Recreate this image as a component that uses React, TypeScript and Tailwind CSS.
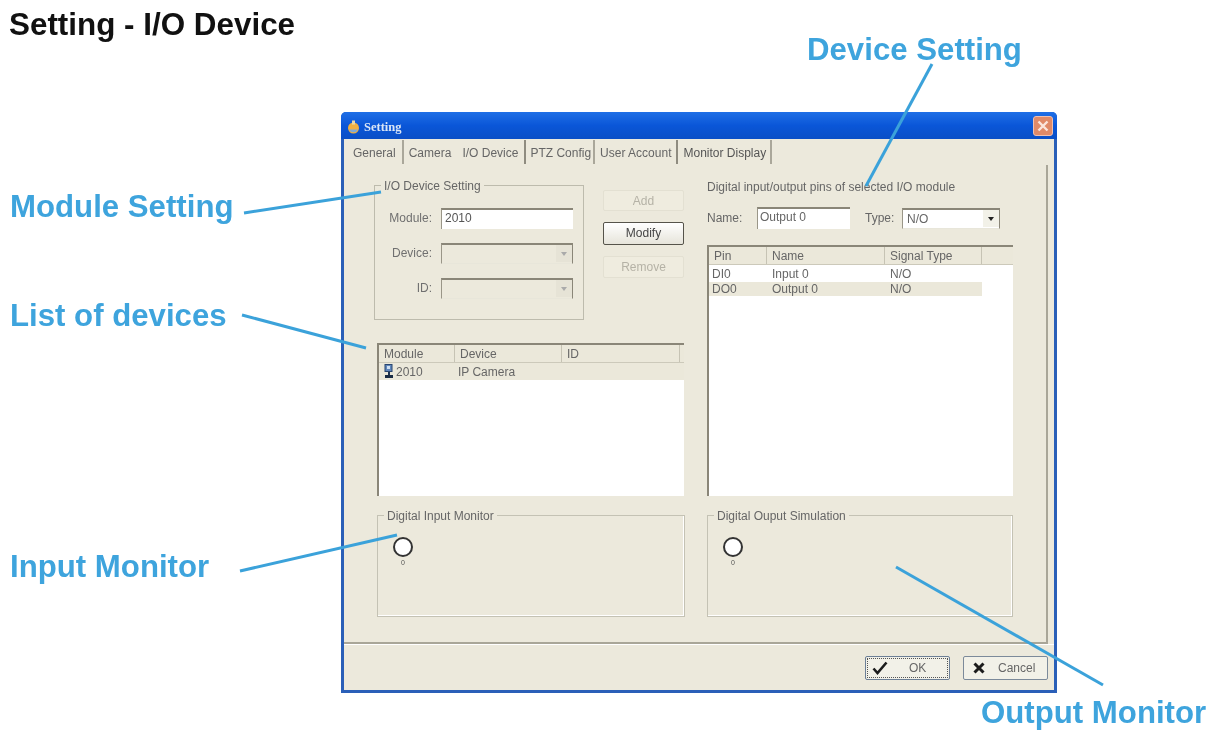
const groupTitle = "absolute -top-[7px] left-[6px] bg-[#ece9dc] px-[3px] text-[12px] leading-[14px] text-[#666] whitespace-nowrap";
const ui = "font-['Liberation_Sans',Arial,sans-serif]";

function Annotation({ className, children }: { className: string; children: string }) {
  return (
    <div className={`absolute text-[31.2px] leading-[34px] font-bold text-[#3ea4dd] whitespace-nowrap ${className}`}>
      {children}
    </div>
  );
}

function Combo({ disabled, value }: { disabled?: boolean; value?: string }) {
  return (
    <div
      className={`flex items-center h-[21px] border-t-2 border-l border-r border-b border-t-[#8a8678] border-l-[#9a9688] border-r-[#8a8678] border-b-[#e8e6da] ${
        disabled ? "w-[132px] bg-[#ece9dc]" : "w-[98px] bg-white"
      }`}
    >
      <span className="flex-1 pl-[4px] text-[12px] text-[#666]">{value}</span>
      <span className={`flex items-center justify-center w-[16px] h-[17px] ${disabled ? "bg-[#e6e3d6]" : "bg-[#f2f1e8]"}`}>
        <span className={`w-0 h-0 border-l-[3px] border-r-[3px] border-t-[4px] border-l-transparent border-r-transparent ${disabled ? "border-t-[#aaa]" : "border-t-[#222]"}`} />
      </span>
    </div>
  );
}

function LeftField({ label, children }: { label: string; children: React.ReactNode }) {
  return (
    <div className="flex items-center h-[22px]">
      <span className="w-[66px] pr-[9px] text-right text-[12px] text-[#707070]">{label}</span>
      {children}
    </div>
  );
}

function Lamp({ label }: { label: string }) {
  return (
    <div className="flex flex-col items-center w-[22px]">
      <span className="block w-[20px] h-[20px] rounded-full bg-white border-[2px] border-[#333]" />
      <span className="mt-[2px] text-[7px] leading-[8px] text-[#555]">{label}</span>
    </div>
  );
}

function Monitor({ title, label }: { title: string; label: string }) {
  return (
    <div className="relative h-[102px] border border-[#c4c2b4] pt-[21px] pl-[14px] shadow-[inset_-1px_-1px_0_#fff]">
      <span className={groupTitle}>{title}</span>
      <Lamp label={label} />
    </div>
  );
}

function ListHead({ cols }: { cols: [string, string][] }) {
  return (
    <div className="flex h-[18px] border-b border-[#ccc9ba] bg-[#ebe8da]">
      {cols.map(([name, w]) => (
        <span key={name} className={`${w} pl-[5px] border-r border-[#c6c3b4] text-[12px] leading-[18px] text-[#666]`}>
          {name}
        </span>
      ))}
    </div>
  );
}

export default function App() {
  return (
    <div className={`relative w-[1210px] h-[734px] bg-white overflow-hidden blur-[0.4px] ${ui}`}>
      <h1 className="pt-[10px] pl-[9px] h-[112px] text-[31.4px] leading-[30px] font-bold text-[#111]">
        Setting - I/O Device
      </h1>

      {/* dialog */}
      <div className="ml-[341px] w-[716px] h-[581px] flex flex-col rounded-t-[5px] bg-[#2a5fb8] px-[3px] pb-[3px]">
        <div className="flex items-center h-[27px] shrink-0 -mx-[3px] px-[5px] rounded-t-[5px] bg-gradient-to-b from-[#1f6fe6] via-[#0a56d8] to-[#0a4fc6]">
          <svg width="15" height="15" viewBox="0 0 15 15" className="mt-[2px]">
            <circle cx="7.5" cy="9" r="5.5" fill="#f0b040" />
            <path d="M3 10.5 A5 5 0 0 0 12 10.5Z" fill="#7fa9d8" />
            <rect x="6" y="1.5" width="3" height="4" fill="#e8d7a8" />
          </svg>
          <span className="ml-[3px] mt-[3px] font-['Liberation_Serif',serif] text-[12.5px] font-bold text-[#dbe6f6]">Setting</span>
          <span className="ml-auto mr-[-1px] flex items-center justify-center w-[20px] h-[20px] rounded-[3px] bg-[#e08a68] border border-[#f0c0b0]">
            <svg width="14" height="14" viewBox="0 0 14 14">
              <path d="M2.5 2.5l9 9M11.5 2.5l-9 9" stroke="#fbe6dc" strokeWidth="2.4" />
            </svg>
          </span>
        </div>

        <div className="flex-1 flex flex-col bg-[#ece9dc] min-h-0">
          {/* tabs */}
          <div className="flex items-stretch h-[26px] py-[1px] pl-[9px] text-[12px] leading-[20px] text-[#666] shrink-0 whitespace-nowrap">
            <span className="pt-[3px] pr-[6px] border-r-2 border-[#aaa79a]">General</span>
            <span className="pt-[3px] pl-[5px] pr-[11px]">Camera</span>
            <span className="pt-[3px] pr-[6px] border-r-2 border-[#8f8c80]">I/O Device</span>
            <span className="pt-[3px] pl-[4px] pr-[2px] border-r-2 border-[#aaa79a]">PTZ Config</span>
            <span className="pt-[3px] pl-[5px] pr-[5px] border-r-2 border-[#8f8c80]">User Account</span>
            <span className="pt-[3px] pl-[5px] pr-[4px] border-r-2 border-[#aaa79a] text-[#555]">Monitor Display</span>
          </div>

          {/* tab page */}
          <div className="h-[479px] mr-[6px] border-r-2 border-b-2 border-[#a9a698] shrink-0 flex pl-[30px] pt-[20px]">
            <div className="w-[333px] shrink-0 flex flex-col">
              <div className="flex">
                <div className="relative w-[210px] h-[135px] border border-[#bdbbad] pt-[21px] flex flex-col gap-[13px]">
                  <span className={groupTitle}>I/O Device Setting</span>
                  <LeftField label="Module:">
                    <div className="w-[132px] h-[21px] bg-white border-t-2 border-l border-t-[#8a8678] border-l-[#9a9688] pl-[3px] text-[12px] leading-[17px] text-[#555]">2010</div>
                  </LeftField>
                  <LeftField label="Device:"><Combo disabled /></LeftField>
                  <LeftField label="ID:"><Combo disabled /></LeftField>
                </div>
                <div className="ml-[19px] mt-[5px] w-[81px] flex flex-col gap-[11px] text-[12px] text-center">
                  <div className="h-[21px] leading-[21px] bg-[#efecdf] rounded-[2px] border border-[#e3e0d2] text-[#b5b2a6]">Add</div>
                  <div className="h-[23px] leading-[21px] bg-gradient-to-b from-white to-[#e6e4da] rounded-[2px] border border-[#55534a] text-[#444]">Modify</div>
                  <div className="h-[22px] leading-[21px] bg-[#efecdf] rounded-[2px] border border-[#e3e0d2] text-[#b5b2a6]">Remove</div>
                </div>
              </div>

              {/* module list */}
              <div className="mt-[23px] ml-[3px] w-[307px] h-[153px] bg-white border-t-2 border-l-2 border-[#8a8678]">
                <ListHead cols={[["Module", "w-[76px]"], ["Device", "w-[107px]"], ["ID", "w-[118px]"]]} />
                <div className="flex items-center h-[17px] bg-[#ebe8da] text-[12px] text-[#666]">
                  <svg className="ml-[5px]" width="10" height="15" viewBox="0 0 10 15">
                    <rect x="1" y="0.5" width="7" height="7" fill="#5f86bb" stroke="#29456f" />
                    <rect x="3" y="2" width="3" height="3" fill="#cfe0f2" />
                    <rect x="4" y="8" width="2" height="3" fill="#1f3350" />
                    <rect x="1" y="11" width="8" height="3" fill="#1a2c44" />
                  </svg>
                  <span className="w-[64px] pl-[2px]">2010</span>
                  <span>IP Camera</span>
                </div>
              </div>

              <div className="mt-[19px] ml-[3px] w-[308px]">
                <Monitor title="Digital Input Monitor" label="0" />
              </div>
            </div>

            <div className="-mt-[5px] w-[306px] shrink-0 flex flex-col">
              <div className="h-[27px] text-[12px] leading-[14px] text-[#666] whitespace-nowrap">Digital input/output pins of selected I/O module</div>
              <div className="flex items-center h-[22px] text-[12px] text-[#666]">
                <span className="w-[50px]">Name:</span>
                <div className="w-[93px] h-[22px] bg-white border-t-2 border-l border-t-[#8a8678] border-l-[#9a9688] pl-[2px] leading-[17px]">Output 0</div>
                <span className="ml-[15px] w-[37px]">Type:</span>
                <Combo value="N/O" />
              </div>
              <div className="mt-[16px] h-[251px] bg-white border-t-2 border-l-2 border-[#8a8678]">
                <ListHead cols={[["Pin", "w-[58px]"], ["Name", "w-[118px]"], ["Signal Type", "w-[97px]"]]} />
                <div className="flex h-[16px] mt-[1px] text-[12px] leading-[16px] text-[#666]">
                  <span className="w-[58px] pl-[3px]">DI0</span><span className="w-[118px] pl-[5px]">Input 0</span><span className="pl-[5px]">N/O</span>
                </div>
                <div className="flex w-[273px] h-[14px] bg-[#ebe8da] text-[12px] leading-[14px] text-[#666]">
                  <span className="w-[58px] pl-[3px]">DO0</span><span className="w-[118px] pl-[5px]">Output 0</span><span className="pl-[5px]">N/O</span>
                </div>
              </div>
              <div className="mt-[19px]">
                <Monitor title="Digital Ouput Simulation" label="0" />
              </div>
            </div>
          </div>

          {/* footer */}
          <div className="flex-1 flex items-center justify-end gap-[13px] pr-[6px] border-t border-white text-[12px] text-[#666]">
            <div className="flex items-center w-[85px] h-[24px] px-[6px] bg-[#f2f1e8] rounded-[2px] border border-[#6c7f96] outline-1 outline-dotted -outline-offset-3 outline-[#555]">
              <svg width="16" height="14" viewBox="0 0 16 14">
                <path d="M1.5 7.5L5.5 12L14.5 1.5" fill="none" stroke="#1c1c1c" strokeWidth="2.6" />
              </svg>
              <span className="ml-[21px]">OK</span>
            </div>
            <div className="flex items-center w-[85px] h-[24px] px-[9px] bg-[#f2f1e8] rounded-[2px] border border-[#7c8a9a]">
              <svg width="12" height="12" viewBox="0 0 12 12">
                <path d="M1.5 1.5L10.5 10.5M10.5 1.5L1.5 10.5" stroke="#1c1c1c" strokeWidth="3" />
              </svg>
              <span className="ml-[13px]">Cancel</span>
            </div>
          </div>
        </div>
      </div>

      {/* callouts */}
      <svg className="absolute inset-0 pointer-events-none" width="1210" height="734" fill="none" stroke="#3ba2da" strokeWidth="3">
        <path d="M932 64L866 186" />
        <path d="M244 213L381 192" />
        <path d="M242 315L366 348" />
        <path d="M240 571L397 535" />
        <path d="M896 567L1103 685" />
      </svg>
      <Annotation className="left-[807px] top-[33px]">Device Setting</Annotation>
      <Annotation className="left-[10px] top-[190px]">Module Setting</Annotation>
      <Annotation className="left-[10px] top-[299px]">List of devices</Annotation>
      <Annotation className="left-[10px] top-[550px]">Input Monitor</Annotation>
      <Annotation className="left-[981px] top-[696px]">Output Monitor</Annotation>
    </div>
  );
}
